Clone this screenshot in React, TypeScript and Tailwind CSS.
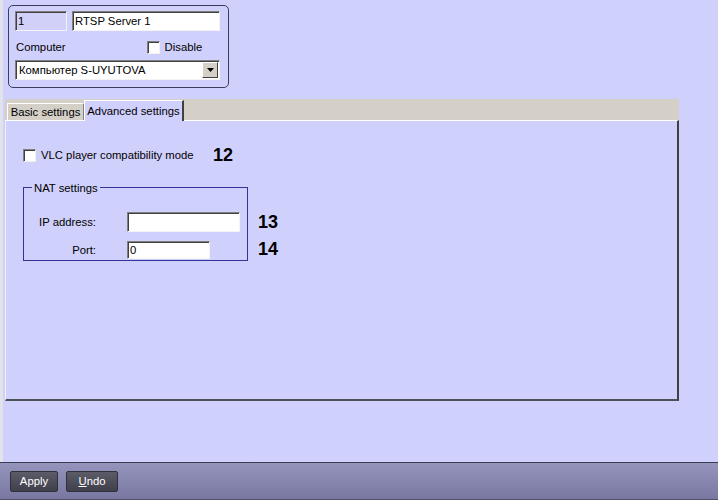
import React from "react";

const font = { fontFamily: '"Liberation Sans", Arial, sans-serif' };

function Check({ className = "" }: { className?: string }) {
  return (
    <div
      className={
        "w-[13px] h-[13px] bg-white border border-t-[#808080] border-l-[#808080] border-b-[#f0f0f0] border-r-[#f0f0f0] shadow-[inset_1px_1px_0_#404040] " +
        className
      }
    />
  );
}

const sunken =
  "border border-t-[#808080] border-l-[#808080] border-b-[#f4f4f4] border-r-[#f4f4f4] shadow-[inset_1px_1px_0_#404040]";

export default function App() {
  return (
    <div
      className="w-[718px] h-[500px] flex flex-col bg-[#d0d0fc] text-[11.3px] text-black overflow-hidden whitespace-nowrap"
      style={font}
    >
      <div className="flex-1 flex flex-col border-l-[3px] border-[#e2e2ea]">
        {/* top box */}
        <div className="ml-[5px] mt-[5px] w-[221px] h-[83px] border border-[#3c3c5c] rounded-[5px] pl-[6px] pr-[6px] pt-[5px] flex flex-col">
          <div className="flex gap-[5px]">
            <div className={"w-[52px] h-[20px] bg-[#d0d0f8] pl-[2px] leading-[18px] " + sunken}>1</div>
            <div className={"w-[148px] h-[20px] bg-white pl-[2px] leading-[18px] " + sunken}>RTSP Server 1</div>
          </div>
          <div className="flex items-center h-[22px] mt-[5px]">
            <span className="pl-[1px]">Computer</span>
            <Check className="ml-[81px]" />
            <span className="ml-[5px]">Disable</span>
          </div>
          <div className={"mt-[2px] w-[205px] h-[20px] bg-white flex items-center " + sunken}>
            <span className="flex-1 pl-[3px]">Компьютер S-UYUTOVA</span>
            <div className="w-[16px] h-[16px] mr-[1px] bg-[#d4d0c8] border border-t-[#ffffff] border-l-[#ffffff] border-b-[#404040] border-r-[#404040] flex items-center justify-center">
              <svg width="7" height="4" viewBox="0 0 7 4">
                <path d="M0 0h7L3.5 4z" fill="#000" />
              </svg>
            </div>
          </div>
        </div>

        {/* tabs */}
        <div className="ml-[2px] mt-[11px] w-[674px] flex flex-col">
          <div className="h-[21px] bg-[#d4d0c8] flex items-end pl-[2px] relative">
            <div className="h-[17px] w-[77px] border-t border-l border-white border-r border-r-[#808080] flex items-center justify-center bg-[#d4d0c8]">
              Basic settings
            </div>
            <div className="h-[21px] w-[100px] -mb-[1px] bg-[#d0d0fc] border-t border-l border-white border-r-2 border-r-[#404040] flex items-start justify-center pt-[2px] relative z-10">
              Advanced settings
            </div>
          </div>
          <div className="h-[281px] border-t border-white border-l border-l-[#f0f0f0] border-r-2 border-r-[#404040] border-b-2 border-b-[#505058] relative">
            <div className="flex items-center ml-[17px] mt-[25px] h-[18px]">
              <Check />
              <span className="ml-[5px]">VLC player compatibility mode</span>
              <span className="absolute left-[207px] top-[21px] text-[18px] font-bold">12</span>
            </div>
            <div className="ml-[17px] mt-[23px] w-[225px] h-[74px] border border-[#333399] relative pt-[18px]">
              <span className="absolute -top-[8px] left-[8px] bg-[#d0d0fc] px-[2px]">NAT settings</span>
              <div className="flex items-center h-[20px] mt-[6px]">
                <span className="w-[72px] text-right">IP address:</span>
                <div className={"ml-[31px] w-[113px] h-[20px] bg-white " + sunken} />
                <span className="absolute left-[234px] top-[21px] text-[18px] font-bold">13</span>
              </div>
              <div className="flex items-center h-[18px] mt-[9px]">
                <span className="w-[72px] text-right">Port:</span>
                <div className={"ml-[31px] w-[83px] h-[18px] bg-white pl-[2px] leading-[16px] " + sunken}>0</div>
                <span className="absolute left-[234px] top-[48px] text-[18px] font-bold">14</span>
              </div>
            </div>
          </div>
        </div>
      </div>

      {/* bottom bar */}
      <div className="h-[38px] border-t border-[#3c3c50] bg-gradient-to-b from-[#9494bc] to-[#7878a2] flex items-center pl-[10px] gap-[8px] border-b border-b-[#505060]">
        <button className="w-[48px] h-[21px] rounded-[2px] bg-gradient-to-b from-[#5c5c68] to-[#40404c] border border-[#30303c] text-white text-[11.3px]" style={font}>
          Apply
        </button>
        <button className="w-[52px] h-[21px] rounded-[2px] bg-gradient-to-b from-[#5c5c68] to-[#40404c] border border-[#30303c] text-white text-[11.3px]" style={font}>
          <span className="underline">U</span>ndo
        </button>
      </div>
    </div>
  );
}
